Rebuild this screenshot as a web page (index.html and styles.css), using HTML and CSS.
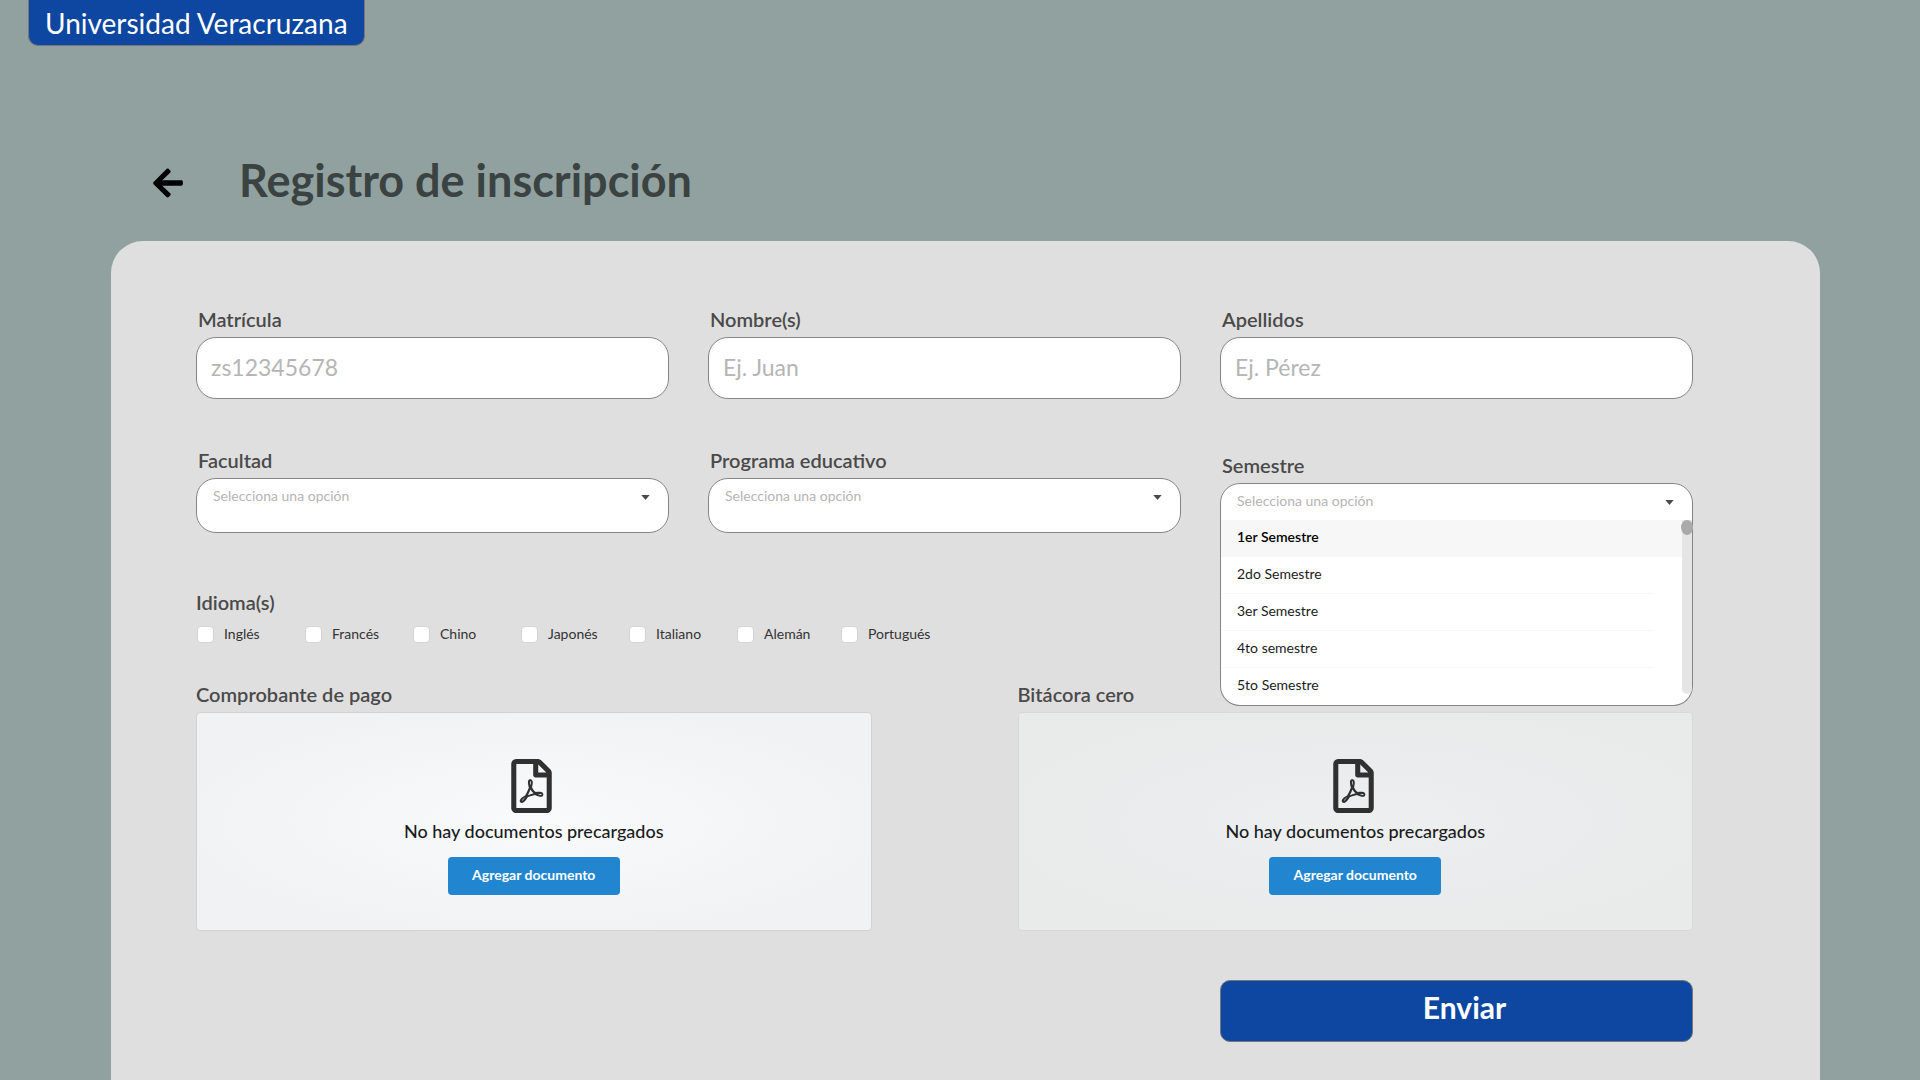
FILE: index.html
```html
<!DOCTYPE html>
<html lang="es">
<head>
<meta charset="utf-8">
<meta name="viewport" content="width=device-width, initial-scale=1">
<title>Registro de inscripción</title>
<link rel="stylesheet" href="styles.css">
</head>
<body>
<svg class="sprite" aria-hidden="true">
  <symbol id="icon-pdf" viewBox="0 0 384 512"><path d="M369.9 97.900L286 14C277 5 264.800-.1 252.100-.1H48C21.500 0 0 21.500 0 48v416c0 26.500 21.500 48 48 48h288c26.500 0 48-21.500 48-48V131.900c0-12.700-5.100-25-14.100-34zM332.100 128H256V51.900l76.100 76.100zM48 464V48h160v104c0 13.300 10.700 24 24 24h104v288H48zm250.200-143.700c-12.200-12-47-8.700-64.400-6.500-17.200-10.500-28.700-25-36.800-46.300 3.900-16.100 10.100-40.600 5.400-56-4.200-26.200-37.800-23.600-42.600-5.900-4.400 16.100-.4 38.500 7 67.100-10 23.900-24.900 56-35.400 74.400-20 10.300-47 26.200-51 46.200-3.300 15.800 26 55.200 76.100-31.200 22.400-7.400 46.800-16.500 68.400-20.100 18.900 10.200 41 17 55.800 17 25.500 0 28-28.200 17.500-38.700zm-198.100 77.800c5.100-13.700 24.500-29.500 30.400-35-19 30.300-30.400 35.700-30.400 35zm81.600-190.600c7.400 0 6.700 32.100 1.800 40.800-4.400-13.900-4.300-40.800-1.800-40.800zm-24.400 136.600c9.700-16.900 18-37 24.700-54.700 8.300 15.100 18.900 27.200 30.100 35.500-20.800 4.300-38.900 13.100-54.800 19.200zm131.600-5s-5 6-37.300-7.800c35.100-2.600 40.900 5.400 37.300 7.800z"/></symbol>
  <symbol id="icon-caret" viewBox="0 0 10 6"><path d="M0 0h10L5 6z"/></symbol>
</svg>

<header class="brand">Universidad Veracruzana</header>

<div class="heading">
  <a class="back" href="#" aria-label="Volver">
    <svg viewBox="0 0 448 512" aria-hidden="true"><path d="M257.500 445.100l-22.200 22.200c-9.400 9.400-24.600 9.400-33.900 0L7 273c-9.400-9.400-9.400-24.600 0-33.900L201.400 44.700c9.400-9.400 24.600-9.400 33.900 0l22.200 22.200c9.500 9.500 9.300 25-.4 34.300L136.600 216H424c13.300 0 24 10.700 24 24v32c0 13.300-10.700 24-24 24H136.600l120.500 114.800c9.800 9.300 10 24.800.4 34.300z"/></svg>
  </a>
  <h1 class="title">Registro de inscripción</h1>
</div>

<main class="card">
  <form class="form">
    <div class="columns">
      <div class="field">
        <label class="label" for="matricula">Matrícula</label>
        <input class="input" id="matricula" type="text" placeholder="zs12345678">
      </div>
      <div class="field">
        <label class="label" for="nombre">Nombre(s)</label>
        <input class="input" id="nombre" type="text" placeholder="Ej. Juan">
      </div>
      <div class="field">
        <label class="label" for="apellidos">Apellidos</label>
        <input class="input" id="apellidos" type="text" placeholder="Ej. Pérez">
      </div>
      <div class="field">
        <label class="label" for="facultad">Facultad</label>
        <div class="dropdown">
          <select class="select" id="facultad"><option>Selecciona una opción</option></select>
          <svg class="caret" aria-hidden="true"><use href="#icon-caret"/></svg>
        </div>
      </div>
      <div class="field">
        <label class="label" for="programa">Programa educativo</label>
        <div class="dropdown">
          <select class="select" id="programa"><option>Selecciona una opción</option></select>
          <svg class="caret" aria-hidden="true"><use href="#icon-caret"/></svg>
        </div>
      </div>
      <div class="field field-open">
        <label class="label" for="semestre">Semestre</label>
        <div class="dropdown dropdown-open">
          <select class="select" id="semestre"><option>Selecciona una opción</option></select>
          <svg class="caret" aria-hidden="true"><use href="#icon-caret"/></svg>
          <div class="menu">
            <ul class="options" role="listbox" aria-label="Semestre">
              <li class="option option-selected" role="option" aria-selected="true">1er Semestre</li>
              <li class="option" role="option">2do Semestre</li>
              <li class="option" role="option">3er Semestre</li>
              <li class="option" role="option">4to semestre</li>
              <li class="option" role="option">5to Semestre</li>
            </ul>
            <div class="track"><div class="thumb"></div></div>
          </div>
        </div>
      </div>
    </div>

    <fieldset class="languages">
      <legend class="label">Idioma(s)</legend>
      <div class="checks">
        <label class="check"><input class="box" type="checkbox">Inglés</label>
        <label class="check"><input class="box" type="checkbox">Francés</label>
        <label class="check"><input class="box" type="checkbox">Chino</label>
        <label class="check"><input class="box" type="checkbox">Japonés</label>
        <label class="check"><input class="box" type="checkbox">Italiano</label>
        <label class="check"><input class="box" type="checkbox">Alemán</label>
        <label class="check"><input class="box" type="checkbox">Portugués</label>
      </div>
    </fieldset>

    <div class="uploads">
      <section class="upload">
        <h2 class="label">Comprobante de pago</h2>
        <div class="drop">
          <svg class="pdf" aria-hidden="true"><use href="#icon-pdf"/></svg>
          <p class="empty">No hay documentos precargados</p>
          <button class="add" type="button">Agregar documento</button>
        </div>
      </section>
      <section class="upload">
        <h2 class="label">Bitácora cero</h2>
        <div class="drop drop-muted">
          <svg class="pdf" aria-hidden="true"><use href="#icon-pdf"/></svg>
          <p class="empty">No hay documentos precargados</p>
          <button class="add" type="button">Agregar documento</button>
        </div>
      </section>
    </div>

    <div class="columns actions">
      <button class="submit" type="submit">Enviar</button>
    </div>
  </form>
</main>
</body>
</html>
```
FILE: styles.css
```css
* { box-sizing: border-box; }

body {
  margin: 0;
  min-height: 100vh;
  display: flex;
  flex-direction: column;
  background: #91a19f;
  color: #1b1c1d;
  font-family: Lato, "Liberation Sans", sans-serif;
  font-size: 14px;
  line-height: 20px;
}

input, select, button { font-family: inherit; }

.sprite { display: none; }

.brand {
  align-self: flex-start;
  height: 46px;
  margin-left: 28px;
  padding: 6px 16px 0;
  border: 1px solid #767676;
  border-top: 0;
  border-radius: 0 0 10px 10px;
  background: #0d47a1;
  color: #fff;
  font-size: 28px;
  line-height: 34px;
}

.heading {
  display: flex;
  align-items: center;
  gap: 56px;
  margin: 107px 100px 0 153px;
  height: 60px;
}

.back { display: flex; color: #000; }
.back svg { width: 30px; height: 34px; fill: currentColor; }

.title {
  margin: 0;
  padding-bottom: 6px;
  color: #3a4342;
  font-size: 45px;
  line-height: 54px;
  font-weight: 700;
}

.card {
  flex: 1;
  margin: 28px 100px 0 111px;
  padding: 66px 127px 38px 85px;
  border-radius: 32px 32px 0 0;
  background: #dfdfdf;
}

.columns {
  display: grid;
  grid-template-columns: repeat(3, 1fr);
  gap: 49px 39px;
}

.field { display: flex; flex-direction: column; gap: 6px; }
.field-open { padding-top: 5px; }

.label {
  margin: 0;
  padding: 0;
  color: #4a4a4a;
  font-size: 20px;
  line-height: 24px;
  font-weight: 600;
}
.field .label { padding: 0 2px; }

.input {
  width: 100%;
  height: 62px;
  padding: 0 14px 2px;
  border: 1px solid #858585;
  border-radius: 20px;
  background: #fff;
  color: #1b1c1d;
  font-size: 23px;
}
.input::placeholder { color: #b5b5b5; opacity: 1; }

.dropdown { position: relative; display: flex; }

.select {
  appearance: none;
  width: 100%;
  height: 55px;
  padding: 0 40px 21px 16px;
  border: 1px solid #858585;
  border-radius: 20px;
  background: #fff;
  color: #b5b5b5;
  font-size: 14px;
}

.caret {
  position: absolute;
  top: 17px;
  right: 19px;
  width: 9px;
  height: 5px;
  fill: #4a4a4a;
  pointer-events: none;
}

.dropdown-open .select { border-radius: 20px 20px 0 0; }

.menu {
  position: absolute;
  z-index: 1;
  top: 37px;
  left: 0;
  right: 0;
  display: flex;
  border: 1px solid #858585;
  border-top: 0;
  border-radius: 0 0 20px 20px;
  background: #fff;
}

.options { flex: 1; margin: 0; padding: 0; list-style: none; }

.option {
  height: 37px;
  padding: 7px 16px;
  background: linear-gradient(#f7f7f7, #f7f7f7) left bottom / calc(100% - 28px) 1px no-repeat;
}
.option:last-child { background: none; }
.option-selected { background: #f7f7f7; font-weight: 600; color: #000; }

.track {
  width: 10px;
  height: 174px;
  border-radius: 0 0 5px 5px;
  background: #e5e5e5;
}
.thumb { width: 12px; height: 15px; margin-left: -1px; border-radius: 50%; background: #aaa; }

.languages { margin: 52px 0 0; padding: 0; border: 0; }

.checks {
  display: grid;
  grid-template-columns: repeat(5, 108px) 104px auto;
  padding: 10px 1px 0;
}

.check {
  display: flex;
  align-items: center;
  gap: 10px;
  color: #333;
}

.box {
  appearance: none;
  width: 17px;
  height: 17px;
  margin: 0;
  border: 1px solid #d4d4d5;
  border-radius: 4px;
  background: #fff;
}

.uploads {
  display: grid;
  grid-template-columns: 1fr 1fr;
  gap: 146px;
  margin-top: 38px;
}

.upload { display: flex; flex-direction: column; gap: 6px; }

.drop {
  display: flex;
  flex-direction: column;
  align-items: center;
  height: 219px;
  padding-top: 46px;
  border: 1px solid #d2d2d3;
  border-radius: 4px;
  background: radial-gradient(#f9fafc, #f0f2f4 75%);
}
.drop-muted { border-color: #d8d8d8; background: radial-gradient(#eeefef, #ebecee 35%, #e9ebea 75%); }

.pdf { width: 41px; height: 54px; margin-right: 4px; fill: #303030; }

.empty {
  margin: 7px 0 15px;
  font-size: 18px;
  line-height: 22px;
  font-weight: 500;
}

.add {
  width: 172px;
  height: 38px;
  padding: 0 0 4px;
  border: 0;
  border-radius: 4px;
  background: #2185d0;
  color: #fff;
  font-size: 14px;
  font-weight: 700;
}

.actions { margin-top: 49px; }

.submit {
  grid-column: 3;
  height: 62px;
  padding: 0 0 8px 16px;
  border: 1px solid #767676;
  border-radius: 10px;
  background: #0d47a1;
  color: #fff;
  font-size: 30px;
  font-weight: 700;
}
```
